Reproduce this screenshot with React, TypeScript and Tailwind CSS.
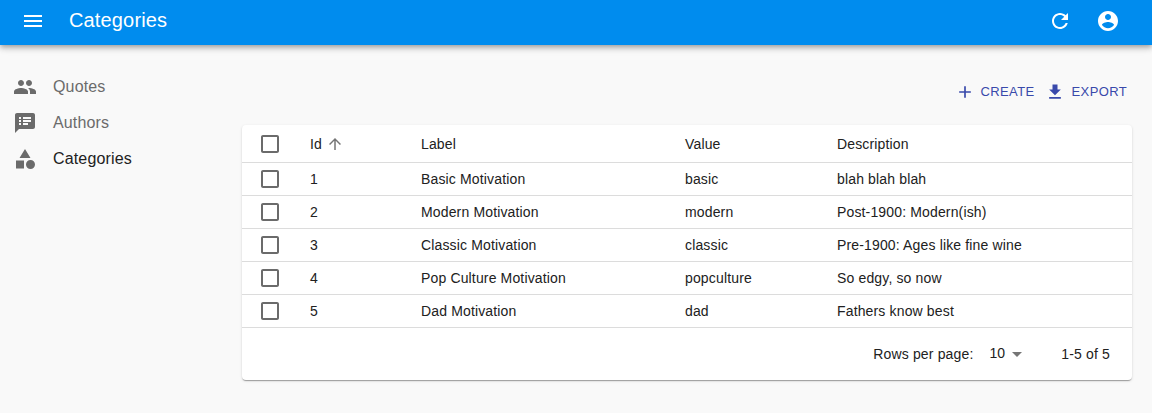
import React from "react";

const paths = {
  menu: "M3 18h18v-2H3v2zm0-5h18v-2H3v2zm0-7v2h18V6H3z",
  refresh:
    "M17.65 6.35C16.2 4.9 14.21 4 12 4c-4.42 0-7.99 3.58-7.99 8s3.57 8 7.99 8c3.73 0 6.84-2.55 7.73-6h-2.08c-.82 2.33-3.04 4-5.65 4-3.31 0-6-2.69-6-6s2.69-6 6-6c1.66 0 3.14.69 4.22 1.78L13 11h7V4l-2.35 2.35z",
  account:
    "M12 2C6.48 2 2 6.48 2 12s4.48 10 10 10 10-4.48 10-10S17.52 2 12 2zm0 3c1.66 0 3 1.34 3 3s-1.34 3-3 3-3-1.34-3-3 1.34-3 3-3zm0 14.2c-2.5 0-4.71-1.28-6-3.22.03-1.99 4-3.08 6-3.08 1.99 0 5.97 1.09 6 3.08-1.29 1.94-3.5 3.22-6 3.22z",
  people:
    "M16 11c1.66 0 2.99-1.34 2.99-3S17.66 5 16 5c-1.66 0-3 1.34-3 3s1.34 3 3 3zm-8 0c1.66 0 2.99-1.34 2.99-3S9.66 5 8 5C6.34 5 5 6.34 5 8s1.34 3 3 3zm0 2c-2.33 0-7 1.17-7 3.5V19h14v-2.5c0-2.33-4.67-3.5-7-3.5zm8 0c-.29 0-.62.02-.97.05 1.16.84 1.97 1.97 1.97 3.45V19h6v-2.5c0-2.33-4.67-3.5-7-3.5z",
  notes:
    "M20 2H4c-1.1 0-1.99.9-1.99 2L2 22l4-4h14c1.1 0 2-.9 2-2V4c0-1.1-.9-2-2-2zM8 14H6v-2h2v2zm0-3H6V9h2v2zm0-3H6V6h2v2zm7 6h-5v-2h5v2zm3-3h-8V9h8v2zm0-3h-8V6h8v2z",
  category:
    "M12 2l-5.5 9h11zM17.5 13a4.5 4.5 0 1 0 0 9 4.5 4.5 0 0 0 0-9zM3 13.5h8v8H3z",
  add: "M19 13h-6v6h-2v-6H5v-2h6V5h2v6h6v2z",
  download: "M19 9h-4V3H9v6H5l7 7 7-7zM5 18v2h14v-2H5z",
  checkbox:
    "M19 5v14H5V5h14m0-2H5c-1.1 0-2 .9-2 2v14c0 1.1.9 2 2 2h14c1.1 0 2-.9 2-2V5c0-1.1-.9-2-2-2z",
  up: "M4 12l1.41 1.41L11 7.83V20h2V7.83l5.58 5.59L20 12l-8-8-8 8z",
  dropdown: "M7 10l5 5 5-5z",
};

function Icon({ name, className = "size-6" }: { name: keyof typeof paths; className?: string }) {
  return (
    <svg viewBox="0 0 24 24" fill="currentColor" aria-hidden="true" className={`shrink-0 ${className}`}>
      <path d={paths[name]} />
    </svg>
  );
}

const navItems: { icon: keyof typeof paths; label: string; active?: boolean }[] = [
  { icon: "people", label: "Quotes" },
  { icon: "notes", label: "Authors" },
  { icon: "category", label: "Categories", active: true },
];

const rows = [
  ["1", "Basic Motivation", "basic", "blah blah blah"],
  ["2", "Modern Motivation", "modern", "Post-1900: Modern(ish)"],
  ["3", "Classic Motivation", "classic", "Pre-1900: Ages like fine wine"],
  ["4", "Pop Culture Motivation", "popculture", "So edgy, so now"],
  ["5", "Dad Motivation", "dad", "Fathers know best"],
];

const rowGrid = "grid grid-cols-[52px_111px_264px_152px_1fr] items-center border-b border-[#dcdcdc] pl-4";

function Check() {
  return (
    <button className="block w-6 text-[#6b6b6b]" aria-label="Select">
      <Icon name="checkbox" />
    </button>
  );
}

export default function App() {
  return (
    <div className="flex h-[413px] flex-col bg-[#f9f9f9] font-['Liberation_Sans',Arial,sans-serif] text-[#212121]">
      <header className="z-10 flex h-[45px] shrink-0 items-center bg-[#008cee] pr-8 pb-[3px] pl-[21px] text-white shadow-[0_2px_4px_-1px_rgba(0,0,0,0.2),0_4px_5px_0_rgba(0,0,0,0.14),0_1px_10px_0_rgba(0,0,0,0.12)]">
        <Icon name="menu" />
        <h1 className="ml-6 flex-1 pb-0.5 text-xl leading-6 tracking-[0.15px]">Categories</h1>
        <Icon name="refresh" />
        <Icon name="account" className="ml-6 size-6" />
      </header>
      <div className="flex flex-1">
        <nav className="w-[242px] shrink-0 pt-6 pl-[13px]">
          {navItems.map((item) => (
            <a key={item.label} className="flex h-9 items-center gap-4">
              <Icon name={item.icon} className="size-6 text-[#6b6b6b]" />
              <span className={item.active ? "text-base tracking-[0.15px] text-[#212121]" : "text-base tracking-[0.15px] text-[#6b6b6b]"}>
                {item.label}
              </span>
            </a>
          ))}
        </nav>
        <main className="w-[890px]">
          <div className="flex h-20 items-center justify-end pt-[14px] pr-[5px] text-[13px] tracking-[0.37px] text-[#3949ab]">
            <button className="flex items-center gap-[6px]">
              <Icon name="add" className="size-5" />
              CREATE
            </button>
            <button className="ml-[10px] flex items-center gap-[7px]">
              <Icon name="download" className="size-5" />
              EXPORT
            </button>
          </div>
          <section className="h-[255px] rounded bg-white text-sm tracking-[0.15px] shadow-[0_2px_1px_-1px_rgba(0,0,0,0.2),0_1px_1px_0_rgba(0,0,0,0.14),0_1px_3px_0_rgba(0,0,0,0.12)]">
            <div className={`${rowGrid} h-[38px]`}>
              <Check />
              <span className="flex items-center gap-1">
                Id
                <Icon name="up" className="size-[18px] text-[#757575]" />
              </span>
              <span>Label</span>
              <span>Value</span>
              <span>Description</span>
            </div>
            {rows.map((row) => (
              <div key={row[0]} className={`${rowGrid} h-[33px]`}>
                <Check />
                {row.map((cell, i) => (
                  <span key={i}>{cell}</span>
                ))}
              </div>
            ))}
            <div className="flex h-[52px] items-center justify-end pr-[22px]">
              <span>Rows per page:</span>
              <button className="ml-4 flex items-center">
                <span className="pb-0.5">10</span>
                <Icon name="dropdown" className="size-6 text-[#757575]" />
              </button>
              <span className="ml-8">1-5 of 5</span>
            </div>
          </section>
        </main>
      </div>
    </div>
  );
}
